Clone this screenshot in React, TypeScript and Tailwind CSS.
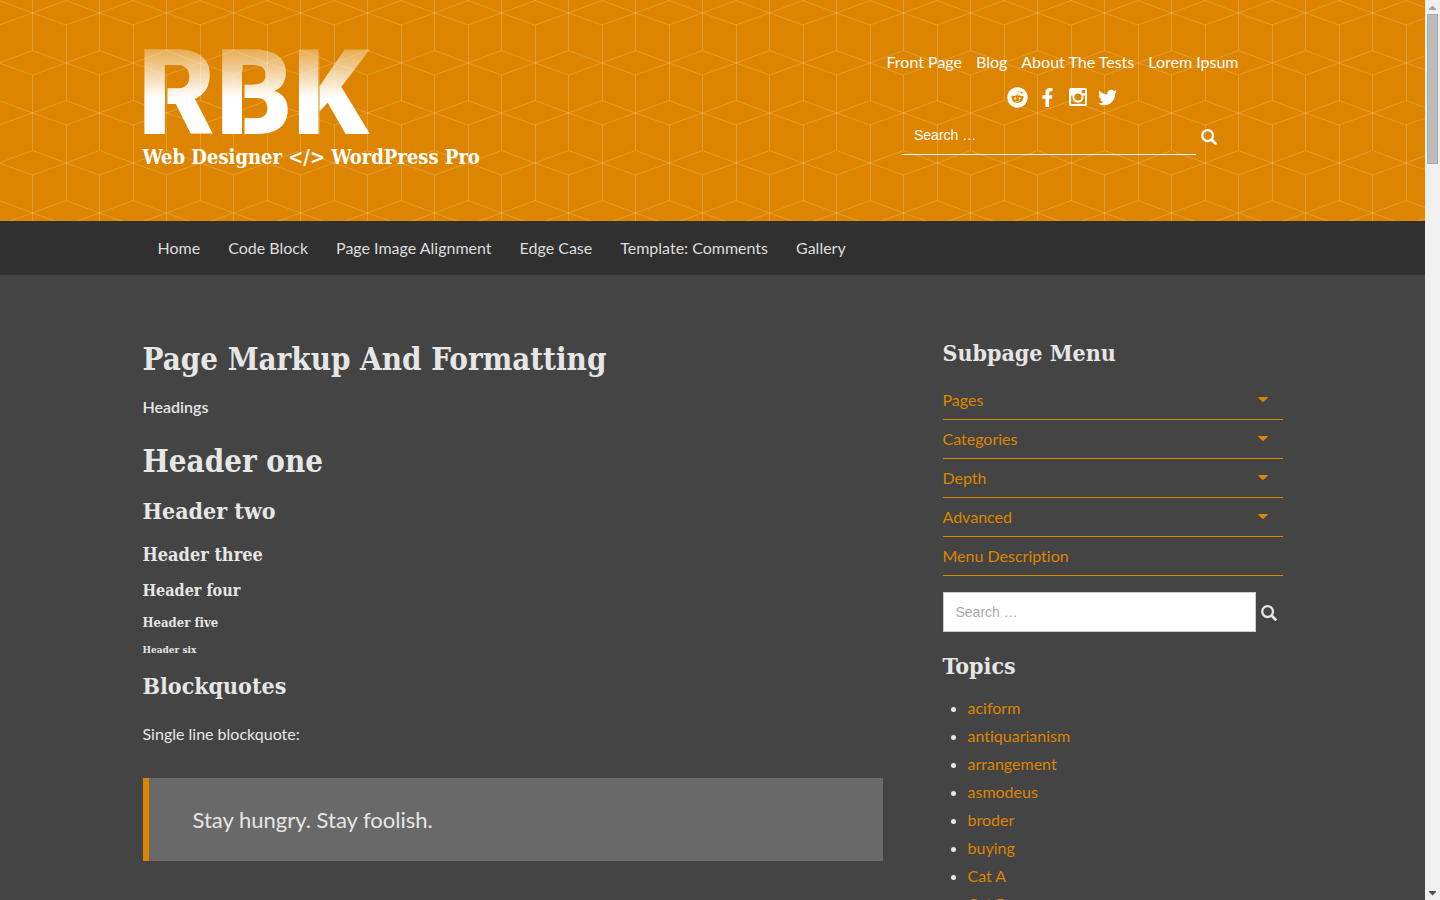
import type { ReactNode } from "react";
import { FaFacebookF, FaReddit, FaTwitter } from "react-icons/fa";

const topLinks = ["Front Page", "Blog", "About The Tests", "Lorem Ipsum"];
const mainLinks = ["Home", "Code Block", "Page Image Alignment", "Edge Case", "Template: Comments", "Gallery"];
const subpages = [
  { label: "Pages", nested: true },
  { label: "Categories", nested: true },
  { label: "Depth", nested: true },
  { label: "Advanced", nested: true },
  { label: "Menu Description", nested: false },
];
const topics = ["aciform", "antiquarianism", "arrangement", "asmodeus", "broder", "buying", "Cat A", "Cat B", "Cat C"];

const slab = "font-['DejaVu_Serif_Condensed','DejaVu_Serif',serif] font-bold";

function CubePattern() {
  return (
    <svg className="absolute inset-0 h-full w-full" aria-hidden="true">
      <defs>
        <pattern id="cubes" width="67" height="100" patternUnits="userSpaceOnUse" x="-1" y="0">
          <g fill="none" stroke="#fff" strokeOpacity="0.18" strokeWidth="1">
            <path d="M33.5 -25V50.5M33.5 75V150.5M0.5 25V101M67.5 25V101" />
            <path d="M0 0.5L33.5 13L0 25M67 0.5L33.5 13L67 25" />
            <path d="M0 63L33.5 50.5L67 63L33.5 75Z" />
            <path d="M0.5 0V1M67.5 0V1" />
          </g>
        </pattern>
      </defs>
      <rect width="100%" height="100%" fill="url(#cubes)" />
    </svg>
  );
}

function Logo() {
  return (
    <svg className="block h-[86px] w-[232px] overflow-visible" viewBox="0 0 232 86" role="img" aria-label="RBK">
      <defs>
        <linearGradient id="fade" gradientUnits="userSpaceOnUse" x1="0" y1="0" x2="0" y2="86">
          <stop offset="0" stopColor="#fff" stopOpacity="0.3" />
          <stop offset="0.58" stopColor="#fff" />
        </linearGradient>
        <mask id="stencil" maskUnits="userSpaceOnUse" x="-10" y="-30" width="260" height="150">
          <rect x="-10" y="-30" width="260" height="150" fill="#fff" />
          <path d="M22 23H24.500V86H22ZM99 23H101.500V86H99ZM175.500 0H176.500V86H175.500Z" fill="#000" />
        </mask>
      </defs>
      <text x="-5" y="86" fontFamily="Roboto, sans-serif" fontWeight="900" fontSize="119" fill="url(#fade)" mask="url(#stencil)">
        RBK
      </text>
    </svg>
  );
}

function InstagramIcon() {
  return (
    <svg viewBox="0 0 18 18" className="h-[18px] w-[18px]" fill="currentColor" aria-hidden="true">
      <path
        fillRule="evenodd"
        d="M2 0H16A2 2 0 0 1 18 2V16A2 2 0 0 1 16 18H2A2 2 0 0 1 0 16V2A2 2 0 0 1 2 0ZM12.800 2.600V4.700A.6.6 0 0 0 13.400 5.300H15.400A.6.6 0 0 0 16 4.700V2.600A.6.6 0 0 0 15.400 2H13.400A.6.6 0 0 0 12.800 2.600ZM2 7.600V15.300A.7.7 0 0 0 2.700 16H15.300A.7.7 0 0 0 16 15.300V7.600H14.400A5.600 5.600 0 1 1 3.600 7.600ZM9 5.400A3.600 3.600 0 1 0 9 12.600A3.600 3.600 0 1 0 9 5.400Z"
      />
    </svg>
  );
}

function SearchIcon() {
  return (
    <svg viewBox="0 0 16 16" className="mt-0.5 block h-4 w-4" fill="none" stroke="currentColor" strokeLinecap="round" aria-hidden="true">
      <circle cx="6.6" cy="6.6" r="5.4" strokeWidth="2.3" />
      <path d="M10.8 10.8L14.4 14.4" strokeWidth="2.8" />
    </svg>
  );
}

function Social({ label, children }: { label: string; children: ReactNode }) {
  return (
    <a href="#" aria-label={label} className="flex h-6 w-[30px] items-center justify-center">
      {children}
    </a>
  );
}

function Scrollbar() {
  return (
    <div className="flex w-[15px] shrink-0 flex-col items-center bg-[#f0f0f0]" aria-hidden="true">
      <svg className="h-[14px] w-[15px] shrink-0" viewBox="0 0 15 14">
        <path d="M4 10H11V9L7.500 5.500L4 9Z" fill="#a3a3a3" />
      </svg>
      <div className="h-[150px] w-[11px] border border-[#a8a8a8] bg-[#bcbcbc]" />
      <svg className="mt-auto h-[14px] w-[15px] shrink-0" viewBox="0 0 15 14">
        <path d="M4 5H11V6L7.500 9.500L4 6Z" fill="#505050" />
      </svg>
    </div>
  );
}

export default function App() {
  return (
    <div className="flex h-screen overflow-hidden bg-[#444] font-[Lato,sans-serif] text-base leading-7 text-[#e6e6e6] [font-variant-ligatures:none]">
      <div className="min-w-0 flex-1 overflow-hidden">
        <header className="relative bg-[#dd8500] text-white">
          <CubePattern />
          <div className="relative mx-auto flex h-[221px] max-w-[1140px] justify-between pt-12">
            <div>
              <a href="#" className="block">
                <Logo />
              </a>
              <p className={`${slab} mt-[9px] text-[20px] leading-7`}>Web Designer &lt;/&gt; WordPress Pro</p>
            </div>
            <div className="flex w-[440px] flex-col items-center">
              <nav aria-label="Top" className="flex gap-[14px] whitespace-nowrap">
                {topLinks.map((l) => (
                  <a key={l} href="#">{l}</a>
                ))}
              </nav>
              <div className="mt-[9px] flex">
                <Social label="Reddit"><FaReddit size={21} /></Social>
                <Social label="Facebook"><FaFacebookF size={19} /></Social>
                <Social label="Instagram"><InstagramIcon /></Social>
                <Social label="Twitter"><FaTwitter size={19} /></Social>
              </div>
              <form className="mt-[7px] flex w-[321px] items-center pr-[6px]" onSubmit={(e) => e.preventDefault()}>
                <input
                  type="search"
                  aria-label="Search the site"
                  placeholder="Search …"
                  className="h-[39px] min-w-0 flex-1 border-b border-white bg-transparent px-3 font-['Liberation_Sans',sans-serif] text-sm text-white outline-none placeholder:text-white"
                />
                <button type="submit" aria-label="Search" className="ml-[5px]"><SearchIcon /></button>
              </form>
            </div>
          </div>
        </header>

        <nav aria-label="Main" className="bg-[#303030] text-[#ddd]">
          <div className="mx-auto flex h-[54px] max-w-[1140px] items-center gap-7 px-[15px] whitespace-nowrap">
            {mainLinks.map((l) => (
              <a key={l} href="#">{l}</a>
            ))}
          </div>
        </nav>

        <div className="mx-auto flex max-w-[1140px] gap-[60px] pt-[60px]">
          <main className="min-w-0 flex-1">
            <h1 className={`${slab} text-[31px] leading-[48px]`}>Page Markup And Formatting</h1>
            <p className="mt-[10px] font-semibold">Headings</p>
            <h1 className={`${slab} mt-4 text-[31px] leading-[48px]`}>Header one</h1>
            <h2 className={`${slab} mt-2 text-[23px] leading-9`}>Header two</h2>
            <h3 className={`${slab} mt-[10px] text-[18px] leading-8`}>Header three</h3>
            <h4 className={`${slab} mt-2 text-[16px] leading-6`}>Header four</h4>
            <h5 className={`${slab} mt-2 text-[13px] leading-6`}>Header five</h5>
            <h6 className={`${slab} mt-[5px] text-[10px] leading-5`}>Header six</h6>
            <h2 className={`${slab} mt-2 text-[23px] leading-9`}>Blockquotes</h2>
            <p className="mt-4">Single line blockquote:</p>
            <blockquote className="mt-[30px] border-l-6 border-[#dd8500] bg-[#696969] px-11 py-6 text-[22px] leading-[35px]">
              Stay hungry. Stay foolish.
            </blockquote>
          </main>

          <aside className="w-[340px] shrink-0">
            <h2 className={`${slab} text-[23px] leading-9`}>Subpage Menu</h2>
            <ul className="mt-[10px] text-[#dd8500]">
              {subpages.map((s) => (
                <li key={s.label}>
                  <a href="#" className="flex h-[39px] items-center justify-between border-b border-[#dd8500] pr-[15px]">
                    {s.label}
                    {s.nested && (
                      <svg className="mb-0.5 h-[5px] w-[10px]" viewBox="0 0 10 5" aria-hidden="true">
                        <path d="M.5 0H9.500Q10 .4 9.600 .9L5.500 4.800Q5 5.200 4.500 4.800L.4 .9Q0 .4 .5 0Z" fill="currentColor" />
                      </svg>
                    )}
                  </a>
                </li>
              ))}
            </ul>
            <form className="mt-4 flex items-center" onSubmit={(e) => e.preventDefault()}>
              <input
                type="search"
                aria-label="Search articles"
                placeholder="Search …"
                className="h-10 w-[313px] border border-[#ccc] bg-white px-3 font-['Liberation_Sans',sans-serif] text-sm text-[#444] outline-none placeholder:text-[#a9a9a9]"
              />
              <button type="submit" aria-label="Search" className="ml-[5px]"><SearchIcon /></button>
            </form>
            <h2 className={`${slab} mt-4 text-[23px] leading-9`}>Topics</h2>
            <ul className="mt-[10px] list-disc pl-[25px]">
              {topics.map((t) => (
                <li key={t}>
                  <a href="#" className="text-[#dd8500]">{t}</a>
                </li>
              ))}
            </ul>
          </aside>
        </div>
      </div>
      <Scrollbar />
    </div>
  );
}
